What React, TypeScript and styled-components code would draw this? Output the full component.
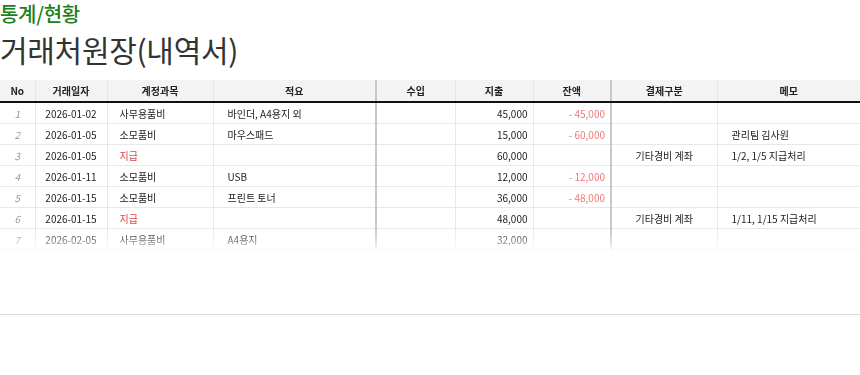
import React from 'react'
import styled, { createGlobalStyle } from 'styled-components'

type Row = {
    no: number
    date: string
    account: string
    summary: string
    income: string
    expense: string
    balance: string
    payment: string
    memo: string
}

const rows: Row[] = [
    { no: 1, date: '2026-01-02', account: '사무용품비', summary: '바인더, A4용지 외', income: '', expense: '45,000', balance: '- 45,000', payment: '', memo: '' },
    { no: 2, date: '2026-01-05', account: '소모품비', summary: '마우스패드', income: '', expense: '15,000', balance: '- 60,000', payment: '', memo: '관리팀 김사원' },
    { no: 3, date: '2026-01-05', account: '지급', summary: '', income: '', expense: '60,000', balance: '', payment: '기타경비 계좌', memo: '1/2, 1/5 지급처리' },
    { no: 4, date: '2026-01-11', account: '소모품비', summary: 'USB', income: '', expense: '12,000', balance: '- 12,000', payment: '', memo: '' },
    { no: 5, date: '2026-01-15', account: '소모품비', summary: '프린트 토너', income: '', expense: '36,000', balance: '- 48,000', payment: '', memo: '' },
    { no: 6, date: '2026-01-15', account: '지급', summary: '', income: '', expense: '48,000', balance: '', payment: '기타경비 계좌', memo: '1/11, 1/15 지급처리' },
    { no: 7, date: '2026-02-05', account: '사무용품비', summary: 'A4용지', income: '', expense: '32,000', balance: '', payment: '', memo: '' }
]

const GlobalStyle = createGlobalStyle`
    body {
        margin: 0;
        background: #fff;
        font-family: 'Noto Sans CJK KR', 'Noto Sans', sans-serif;
    }
`

function App() {
    return (
        <Page>
            <GlobalStyle />
            <Crumb>통계/현황</Crumb>
            <Title>거래처원장(내역서)</Title>
            <TableWrap>
                <Table>
                    <colgroup>
                        <col style={{ width: 35 }} />
                        <col style={{ width: 72 }} />
                        <col style={{ width: 106 }} />
                        <col style={{ width: 163 }} />
                        <col style={{ width: 79 }} />
                        <col style={{ width: 78 }} />
                        <col style={{ width: 78 }} />
                        <col style={{ width: 106 }} />
                        <col style={{ width: 143 }} />
                    </colgroup>
                    <thead>
                        <tr>
                            <Th>No</Th>
                            <Th>거래일자</Th>
                            <Th>계정과목</Th>
                            <Th $thick>적요</Th>
                            <Th>수입</Th>
                            <Th>지출</Th>
                            <Th $thick>잔액</Th>
                            <Th>결제구분</Th>
                            <Th>메모</Th>
                        </tr>
                    </thead>
                    <tbody>
                        {rows.map((r) => (
                            <tr key={r.no}>
                                <NoCell>{r.no}</NoCell>
                                <Td $align="center">{r.date}</Td>
                                <Td $pad="12px" $red={r.account === '지급'}>{r.account}</Td>
                                <Td $pad="14px" $thick>{r.summary}</Td>
                                <Td $align="right">{r.income}</Td>
                                <Td $align="right">{r.expense}</Td>
                                <Td $align="right" $thick $minus>{r.balance}</Td>
                                <Td $align="center">{r.payment}</Td>
                                <Td $pad="14px">{r.memo}</Td>
                            </tr>
                        ))}
                    </tbody>
                </Table>
            </TableWrap>
            <Footer />
        </Page>
    )
}

export default App

const Page = styled.div`
    width: 860px;
    height: 375px;
    overflow: hidden;
`

const Crumb = styled.div`
    height: 24px;
    padding-top: 3px;
    font-size: 20px;
    line-height: 22px;
    color: #1b7f1b;
    font-weight: 500;
    letter-spacing: -0.3px;
`

const Title = styled.h1`
    margin: 0;
    height: 53px;
    font-size: 30px;
    line-height: 44px;
    font-weight: 400;
    color: #333;
    letter-spacing: -0.3px;
`

const TableWrap = styled.div`
    height: 172px;
    overflow: hidden;
    -webkit-mask-image: linear-gradient(to bottom, #000 150px, rgba(0, 0, 0, 0.45) 164px, transparent 174px);
    mask-image: linear-gradient(to bottom, #000 150px, rgba(0, 0, 0, 0.45) 164px, transparent 174px);
`

const Table = styled.table`
    width: 860px;
    table-layout: fixed;
    border-collapse: collapse;
    font-size: 10px;
    color: #222;
`

const Th = styled.th<{ $thick?: boolean }>`
    height: 21px;
    padding: 0;
    background: #f3f3f3;
    font-weight: 700;
    font-size: 10px;
    color: #222;
    text-align: center;
    border-bottom: 2px solid #111;
    border-right: ${(p) => (p.$thick ? '2px solid #c8c8c8' : '1px solid #e4e4e4')};
    &:last-child {
        border-right: none;
    }
`

const Td = styled.td<{ $align?: string; $pad?: string; $thick?: boolean; $red?: boolean; $minus?: boolean }>`
    height: 20px;
    padding: 0 ${(p) => (p.$align === 'right' ? '5px' : '0')} 0 ${(p) => p.$pad || '0'};
    text-align: ${(p) => p.$align || 'left'};
    color: ${(p) => (p.$red ? '#e0474c' : p.$minus ? '#f07a7a' : '#222')};
    border-bottom: 1px solid #e8e8e8;
    border-right: ${(p) => (p.$thick ? '2px solid #c8c8c8' : '1px solid #e8e8e8')};
    white-space: nowrap;
    &:last-child {
        border-right: none;
    }
`

const NoCell = styled.td`
    height: 20px;
    padding: 0;
    text-align: center;
    font-style: italic;
    color: #999;
    border-bottom: 1px solid #e8e8e8;
    border-right: 1px solid #e8e8e8;
`

const Footer = styled.div`
    margin-top: 62px;
    border-top: 1px solid #d8d8d8;
`
